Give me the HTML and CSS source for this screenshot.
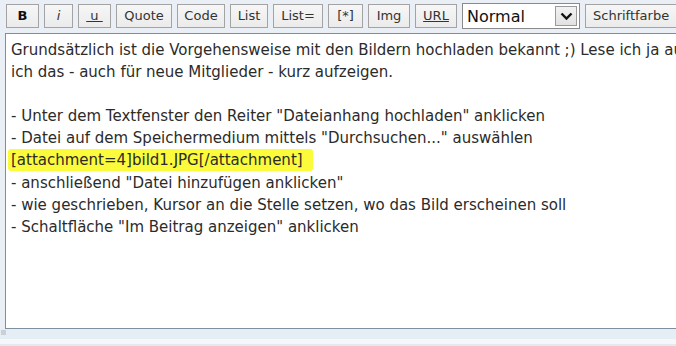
FILE: index.html
```html
<!DOCTYPE html>
<html lang="de">
<head>
<meta charset="utf-8">
<title>Editor</title>
<link rel="stylesheet" href="styles.css">
</head>
<body>
<div class="page">
  <div class="toolbar">
    <button class="btn b-bold">B</button>
    <button class="btn b-ital">i</button>
    <button class="btn b-under"><span class="ul">&nbsp;u&nbsp;</span></button>
    <button class="btn b-quote">Quote</button>
    <button class="btn b-code">Code</button>
    <button class="btn b-list">List</button>
    <button class="btn b-liste">List=</button>
    <button class="btn b-star">[*]</button>
    <button class="btn b-img">Img</button>
    <button class="btn b-url"><span class="ul">URL</span></button>
    <div class="select">
      <span class="sel-text">Normal</span>
      <span class="sel-arrow">
        <svg width="13" height="9" viewBox="0 0 13 9"><path d="M1.5 1.5 L6.5 6.5 L11.5 1.5" fill="none" stroke="#111" stroke-width="2.4"/></svg>
      </span>
    </div>
    <button class="btn b-color">Schriftfarbe</button>
  </div>
  <div class="editor">
    <div class="line">Grundsätzlich ist die Vorgehensweise mit den Bildern hochladen bekannt ;) Lese ich ja auch</div>
    <div class="line">ich das - auch für neue Mitglieder - kurz aufzeigen.</div>
    <div class="line">&nbsp;</div>
    <div class="line">- Unter dem Textfenster den Reiter "Dateianhang hochladen" anklicken</div>
    <div class="line">- Datei auf dem Speichermedium mittels "Durchsuchen..." auswählen</div>
    <div class="line"><span class="mark">[attachment=4]bild1.JPG[/attachment]</span></div>
    <div class="line">- anschließend "Datei hinzufügen anklicken"</div>
    <div class="line">- wie geschrieben, Kursor an die Stelle setzen, wo das Bild erscheinen soll</div>
    <div class="line">- Schaltfläche "Im Beitrag anzeigen" anklicken</div>
  </div>
  <div class="bottom-strip"><span class="grip"></span></div>
  <div class="bottom-light"></div>
  <div class="bottom-edge"></div>
</div>
</body>
</html>
```
FILE: styles.css
```css
html, body {
  margin: 0;
  padding: 0;
  width: 676px;
  height: 346px;
  overflow: hidden;
  background: #e9eff4;
}
.page {
  width: 676px;
  height: 346px;
  overflow: hidden;
  display: flex;
  flex-direction: column;
}
.toolbar {
  display: flex;
  align-items: center;
  gap: 5px;
  height: 26px;
  padding: 3px 0 0 6px;
  flex-shrink: 0;
  white-space: nowrap;
}
.btn {
  flex-shrink: 0;
  height: 24px;
  margin: 0;
  padding: 0;
  border: 1px solid #a3a3a3;
  background: linear-gradient(#f6f6f6, #ebebeb);
  color: #333;
  font-family: "DejaVu Sans", sans-serif;
  font-size: 13px;
  line-height: 22px;
  text-align: center;
  box-sizing: border-box;
}
.b-bold { width: 33px; font-weight: bold; color: #111; }
.b-ital { width: 29px; font-style: italic; }
.b-under { width: 33px; }
.b-quote { width: 56px; }
.b-code { width: 48px; }
.b-list { width: 38px; }
.b-liste { width: 50px; }
.b-star { width: 35px; }
.b-img { width: 42px; }
.b-url { width: 42px; }
.b-color { width: 105px; text-align: left; padding-left: 7px; }
.ul { text-decoration: underline; }
.select {
  flex-shrink: 0;
  width: 118px;
  height: 26px;
  box-sizing: border-box;
  border: 1px solid #8a8a8a;
  background: #fff;
  display: flex;
  align-items: center;
  justify-content: space-between;
  padding: 0 2px 0 4px;
}
.sel-text {
  font-family: "DejaVu Sans", sans-serif;
  font-size: 16px;
  color: #111;
}
.sel-arrow {
  width: 22px;
  height: 20px;
  box-sizing: border-box;
  border: 1px solid #9a9a9a;
  background: linear-gradient(#f2f2f2, #e2e2e2);
  display: flex;
  align-items: center;
  justify-content: center;
}
.editor {
  margin: 4px 0 0 5px;
  height: 296px;
  flex-shrink: 0;
  box-sizing: border-box;
  border: 1px solid #7d8ea0;
  border-right: none;
  background: #fff;
  padding: 5px 0 0 5px;
  font-family: "DejaVu Sans", sans-serif;
  font-size: 15px;
  line-height: 22.1px;
  color: #2b2b2b;
  white-space: nowrap;
  overflow: hidden;
}
.line { height: 22.1px; }
.mark {
  background: #fbfb3c;
  padding: 2px 10px 2px 3px;
  margin-left: -3px;
  border-radius: 3px;
}
.bottom-strip {
  height: 10px;
  flex-shrink: 0;
  background: #e6eef5;
  position: relative;
}
.grip {
  position: absolute;
  left: 1px;
  top: 1px;
  width: 5px;
  height: 5px;
  background: radial-gradient(circle, #c9d0d6 1px, transparent 1.2px) 0 0 / 2px 2px;
}
.bottom-light {
  height: 5px;
  flex-shrink: 0;
  background: #f5f7f9;
}
.bottom-edge {
  flex: 1;
  background: #e3e8f1;
}
```
